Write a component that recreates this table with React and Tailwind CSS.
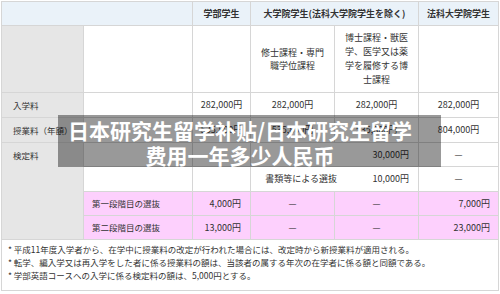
import React from 'react';

const jp = { fontFamily: '"Noto Sans CJK JP", "Noto Sans", sans-serif' };

const Cell = ({ className = '', children }) => (
  <div className={`flex items-center ${className}`}>{children}</div>
);

const Label = ({ children, className = '' }) => (
  <div className={`bg-[#e6e6e6] pl-[11px] text-[8.5px] flex ${className}`}>{children}</div>
);

const Num = ({ children }) => (
  <Cell className="bg-white justify-center">{children}</Cell>
);

const Dash = ({ pink }) => (
  <Cell className={`${pink ? 'bg-[#fdd0fd]' : 'bg-white'} justify-center`}>—</Cell>
);

const notes = [
  '* 平成11年度入学者から、在学中に授業料の改定が行われた場合には、改定時から新授業料が適用される。',
  '* 転学、編入学又は再入学をした者に係る授業料の額は、当該者の属する年次の在学者に係る額と同額である。',
  '* 学部英語コースへの入学に係る検定料の額は、5,000円とする。',
];

const App = () => {
  return (
    <div className="relative w-[500px] h-[294px] bg-white text-[#333] overflow-hidden" style={jp}>
      <div className="pt-px pl-px">
        <div className="grid w-[498px] grid-cols-[81px_108px_57px_83px_83px_79px] grid-rows-[23px_66px_24px_24px_23px_24px_23px_23px] gap-px p-px bg-[#d6d6d6] text-[9px]">
          {/* header */}
          <div className="col-span-2 bg-[#eaf2f9]" />
          <Cell className="bg-[#eaf2f9] justify-center font-bold">学部学生</Cell>
          <Cell className="col-span-2 bg-[#eaf2f9] justify-center font-bold">大学院学生(法科大学院学生を除く)</Cell>
          <Cell className="bg-[#eaf2f9] justify-center font-bold">法科大学院学生</Cell>

          {/* sub header */}
          <div className="bg-[#e6e6e6]" />
          <div className="bg-white" />
          <div className="bg-white" />
          <Cell className="bg-white justify-center text-center leading-[13px]">
            修士課程・専門<br />職学位課程
          </Cell>
          <Cell className="bg-white justify-center text-center leading-[14px]">
            博士課程・獣医<br />学、医学又は薬<br />学を履修する博<br />士課程
          </Cell>
          <div className="bg-white" />

          {/* 入学料 */}
          <Label className="items-center">入学料</Label>
          <div className="bg-white" />
          <Num>282,000円</Num>
          <Num>282,000円</Num>
          <Num>282,000円</Num>
          <Num>282,000円</Num>

          {/* 授業料 */}
          <Label className="items-center">授業料（年額）</Label>
          <div className="bg-white" />
          <Num>535,800円</Num>
          <Num>535,800円</Num>
          <Num>535,800円</Num>
          <Num>804,000円</Num>

          {/* 検定料 */}
          <Label className="row-span-4 items-start pt-[6px]">検定料</Label>
          <div className="bg-white" />
          <div className="bg-white" />
          <div className="col-span-2 grid grid-cols-[94px_1fr] bg-white">
            <Cell className="justify-end pr-[8px]" />
            <Cell className="justify-end pr-[9px]">30,000円</Cell>
          </div>
          <Dash />

          <div className="bg-white" />
          <div className="bg-white" />
          <div className="col-span-2 grid grid-cols-[94px_1fr] bg-white">
            <Cell className="justify-end pr-[8px] whitespace-nowrap">書類等による選抜</Cell>
            <Cell className="justify-end pr-[9px]">10,000円</Cell>
          </div>
          <Dash />

          <Cell className="bg-[#fdd0fd] pl-[8px] text-[8.5px]">第一段階目の選抜</Cell>
          <Cell className="bg-[#fdd0fd] justify-end pr-[9px]">4,000円</Cell>
          <Dash pink />
          <Dash pink />
          <Cell className="bg-[#fdd0fd] justify-end pr-[8px]">7,000円</Cell>

          <Cell className="bg-[#fdd0fd] pl-[8px] text-[8.5px]">第二段階目の選抜</Cell>
          <Cell className="bg-[#fdd0fd] justify-end pr-[9px]">13,000円</Cell>
          <Dash pink />
          <Dash pink />
          <Cell className="bg-[#fdd0fd] justify-end pr-[8px]">23,000円</Cell>
        </div>

        <div className="w-[498px] h-[51px] border-x border-b border-[#d6d6d6] pl-[6px] pt-[3px] text-[8.5px] leading-[13px] whitespace-nowrap">
          {notes.map((n, i) => (
            <p key={i}>{n}</p>
          ))}
        </div>
      </div>

      {/* overlay title */}
      <div
        className="absolute left-[58px] top-[115px] w-[383px] h-[52px] bg-black/40 pt-[3px] pr-[19px] text-center text-white font-bold text-[21px] leading-[25px] whitespace-nowrap"
        style={{ fontFamily: '"Noto Sans CJK SC", "Noto Sans", sans-serif' }}
      >
        <div>日本研究生留学补贴/日本研究生留学</div>
        <div>费用一年多少人民币</div>
      </div>
    </div>
  );
};

export default App;
